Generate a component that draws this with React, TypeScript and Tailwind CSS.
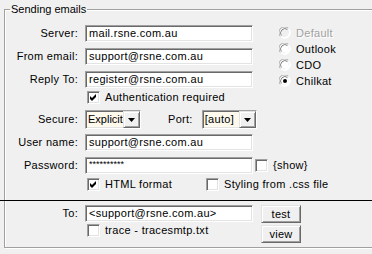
import React from 'react';

const sunken =
  'border border-t-[#a0a0a0] border-l-[#a0a0a0] border-b-white border-r-white shadow-[inset_1px_1px_0_#696969,inset_-1px_-1px_0_#e3e3e3]';
const raised =
  'border border-t-[#e3e3e3] border-l-[#e3e3e3] border-b-[#696969] border-r-[#696969] shadow-[inset_1px_1px_0_#fff,inset_-1px_-1px_0_#a0a0a0]';

const TextBox: React.FC<{ value: string; className?: string }> = ({ value, className = '' }) => (
  <div className={`h-[17px] w-[168px] shrink-0 bg-white pl-[3px] leading-[15px] whitespace-nowrap overflow-hidden ${sunken} ${className}`}>
    {value}
  </div>
);

const Field: React.FC<{ label: string; value: string; className?: string }> = ({ label, value, className = '' }) => (
  <div className={`flex items-center ${className}`}>
    <span className="w-[73px] shrink-0 text-right whitespace-nowrap">{label}</span>
    <TextBox value={value} className="ml-[7px]" />
  </div>
);

const Check: React.FC<{ checked?: boolean }> = ({ checked }) => (
  <div className={`w-[13px] h-[13px] shrink-0 bg-white ${sunken}`}>
    {checked && (
      <svg width="11" height="11" viewBox="0 0 11 11">
        <path d="M2 4 L4 6 L8 2 L8 5 L4 9 L2 7 Z" fill="#000" />
      </svg>
    )}
  </div>
);

const Radio: React.FC<{ checked?: boolean; disabled?: boolean }> = ({ checked, disabled }) => (
  <svg width="12" height="12" viewBox="0 0 12 12" className="shrink-0">
    <circle cx="6" cy="6" r="5.5" fill="#fff" />
    <path d="M1.5 9.5 A5.5 5.5 0 0 1 9.5 1.5" stroke="#a0a0a0" fill="none" />
    <path d="M2.5 8.5 A4.3 4.3 0 0 1 8.5 2.5" stroke="#696969" fill="none" />
    <path d="M9.5 1.5 A5.5 5.5 0 0 1 1.5 9.5" stroke="#fff" fill="none" />
    <path d="M8.5 2.5 A4.3 4.3 0 0 1 2.5 8.5" stroke="#e3e3e3" fill="none" />
    <circle cx="6" cy="6" r="3.6" fill={disabled ? '#f0f0f0' : '#fff'} />
    {checked && <circle cx="6" cy="6" r="2" fill="#000" />}
  </svg>
);

const Combo: React.FC<{ value: string; className?: string }> = ({ value, className = '' }) => (
  <div className={`flex h-[19px] shrink-0 bg-[#fdf9ec] ${sunken} ${className}`}>
    <span className="flex-1 pl-[2px] leading-[17px] whitespace-nowrap overflow-hidden">{value}</span>
    <div className={`w-[17px] h-[17px] bg-[#f0f0f0] flex items-center justify-center ${raised}`}>
      <svg width="7" height="4" viewBox="0 0 7 4">
        <path d="M0 0h7l-3.5 4z" fill="#000" />
      </svg>
    </div>
  </div>
);

const Button: React.FC<{ label: string; className?: string }> = ({ label, className = '' }) => (
  <div className={`w-[40px] h-[18px] bg-[#f0f0f0] text-center leading-[16px] ${raised} ${className}`}>{label}</div>
);

export default function App() {
  return (
    <div className="w-[372px] h-[254px] bg-[#f0f0f0] px-[4px] pt-[3px] text-[11px] leading-[13px] tracking-[0.3px] text-black font-['Liberation_Sans',Arial,sans-serif] overflow-hidden">
      <fieldset className="h-[245px] border border-[#a0a0a0] shadow-[inset_1px_1px_0_#fff,1px_1px_0_#fff]">
        <legend className="ml-[5px] px-[1px] tracking-normal">Sending emails</legend>

        <div className="flex">
          {/* Left - connection fields */}
          <div className="flex flex-col w-[274px] pt-[9px]">
            <Field label="Server:" value="mail.rsne.com.au" />
            <Field label="From email:" value="support@rsne.com.au" className="mt-[6px]" />
            <Field label="Reply To:" value="register@rsne.com.au" className="mt-[6px]" />

            <div className="flex items-center mt-[3px] pl-[82px] whitespace-nowrap">
              <Check checked />
              <span className="ml-[5px]">Authentication required</span>
            </div>

            <div className="flex items-center mt-[6px] whitespace-nowrap">
              <span className="w-[73px] text-right">Secure:</span>
              <Combo value="Explicit" className="ml-[7px] w-[56px] tracking-normal" />
              <span className="ml-[27px]">Port:</span>
              <Combo value="[auto]" className="ml-[9px] w-[55px]" />
            </div>

            <Field label="User name:" value="support@rsne.com.au" className="mt-[5px]" />
            <div className="flex items-center mt-[6px] whitespace-nowrap">
              <span className="w-[73px] shrink-0 text-right">Password:</span>
              <div className={`ml-[7px] h-[17px] w-[168px] shrink-0 bg-white pl-[3px] text-[9px] leading-[12px] tracking-normal ${sunken}`}>**********</div>
              <div className="ml-[2px]">
                <Check />
              </div>
              <span className="ml-[5px]">{'{show}'}</span>
            </div>
          </div>

          {/* Right - send method */}
          <div className="flex flex-col pt-[9px]">
            {[
              { label: 'Default', disabled: true },
              { label: 'Outlook' },
              { label: 'CDO' },
              { label: 'Chilkat', checked: true },
            ].map((r) => (
              <div key={r.label} className="flex items-center h-[16px]">
                <Radio checked={r.checked} disabled={r.disabled} />
                <span className={`ml-[5px] ${r.disabled ? 'text-[#a0a0a0] [text-shadow:1px_1px_0_#fff]' : ''}`}>{r.label}</span>
              </div>
            ))}
          </div>
        </div>

        <div className="flex items-center mt-[4px] pl-[82px] whitespace-nowrap">
          <Check checked />
          <span className="ml-[5px] w-[101px]">HTML format</span>
          <Check />
          <span className="ml-[5px]">Styling from .css file</span>
        </div>

        {/* Separator */}
        <div className="-ml-[5px] mt-[9px] w-[372px] h-px bg-black" />

        {/* Test section */}
        <div className="flex mt-[4px]">
          <div className="flex flex-col">
            <Field label="To:" value="<support@rsne.com.au>" />
            <div className="flex items-center mt-[2px] pl-[82px] whitespace-nowrap">
              <Check />
              <span className="ml-[5px]">trace - tracesmtp.txt</span>
            </div>
          </div>
          <div className="flex flex-col ml-[8px]">
            <Button label="test" />
            <Button label="view" className="mt-[2px]" />
          </div>
        </div>
      </fieldset>
    </div>
  );
}
